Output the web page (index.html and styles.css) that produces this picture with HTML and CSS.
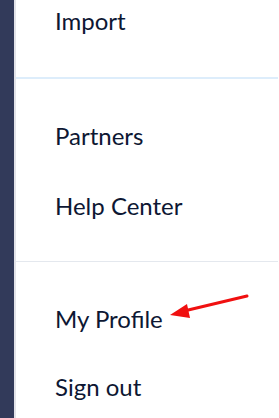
FILE: index.html
```html
<!DOCTYPE html>
<html lang="en">
<head>
    <meta charset="UTF-8">
    <meta name="viewport" content="width=device-width, initial-scale=1.0">
    <title>Menu</title>
    <link rel="stylesheet" href="styles.css">
</head>
<body>

<div class="layout">
    <div class="sidebar"></div>

    <nav class="menu">
        <!-- Tools -->
        <div class="section first">
            <a href="#" class="item">Import</a>
        </div>

        <!-- Resources -->
        <div class="section blue">
            <a href="#" class="item">Partners</a>
            <a href="#" class="item">Help Center</a>
        </div>

        <!-- Account -->
        <div class="section last">
            <a href="#" class="item">My Profile</a>
            <a href="#" class="item short">Sign out</a>
        </div>
    </nav>
</div>

<!-- annotation arrow pointing at My Profile -->
<svg class="arrow" width="279" height="418" viewBox="0 0 279 418">
    <line x1="247" y1="296" x2="184" y2="311" stroke="#f01010" stroke-width="3" stroke-linecap="round"/>
    <polygon points="170,315 187,304 190,318" fill="#f01010"/>
</svg>

</body>
</html>
```

FILE: styles.css
```css
body {
    font-family: Lato, "Open Sans", sans-serif;
    background-color: #ffffff;
    color: #0d1733;
    margin: 0;
    padding: 0;
    overflow: hidden;
}
.layout {
    display: flex;
    height: 418px;
    overflow: hidden;
}
.sidebar {
    width: 14px;
    background-color: #323a5a;
    border-right: 2px solid #e2e3e9;
    flex-shrink: 0;
}
.menu {
    flex: 1;
    display: flex;
    flex-direction: column;
    margin-right: 1px;
}
.section {
    padding: 21px 0;
    border-bottom: 1px solid #e4e8ee;
    display: flex;
    flex-direction: column;
}
.section.first {
    margin-top: -15px;
    padding-top: 0;
    padding-bottom: 22px;
    border-bottom: 2px solid #ddedfb;
}
.section.last {
    border-bottom: none;
    padding-bottom: 0;
}
.item {
    height: 70px;
    display: flex;
    align-items: center;
    padding-left: 39px;
    font-size: 24px;
    color: #0d1733;
    text-decoration: none;
    flex-shrink: 0;
}
.item.short {
    height: 66px;
}
.arrow {
    position: absolute;
    left: 0;
    top: 0;
    pointer-events: none;
}
```
